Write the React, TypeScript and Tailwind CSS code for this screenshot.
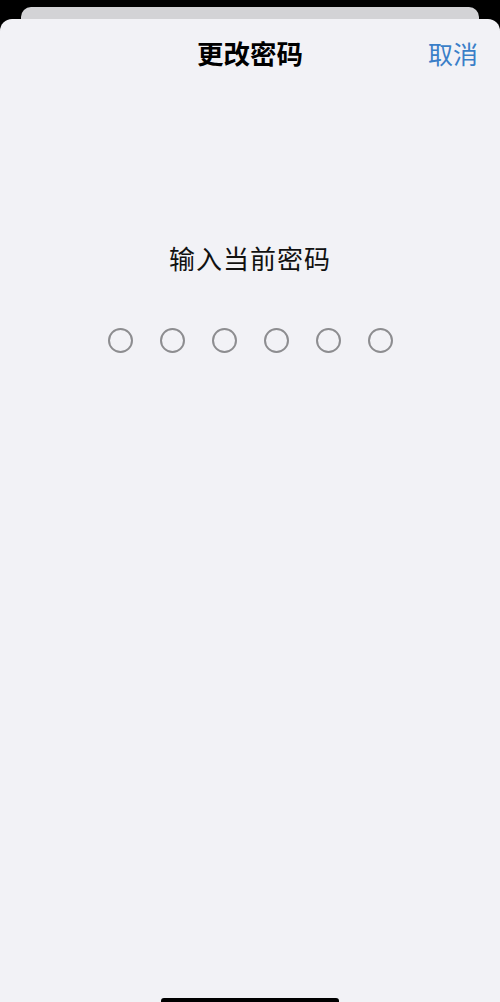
import React from "react";

const font = { fontFamily: '"Noto Sans CJK SC", "Noto Sans", sans-serif' };

export default function App() {
  return (
    <div
      className="w-[500px] h-[1002px] bg-black flex flex-col overflow-hidden"
      style={font}
    >
      <div className="mt-[7px] mx-[21px] h-[12px] rounded-t-[10px] bg-[#d3d3d6] shrink-0" />
      <div className="flex-1 flex flex-col rounded-t-[12px] bg-[#f2f2f6]">
        <div className="relative h-[68px] flex items-center justify-center shrink-0">
          <span className="text-[26.5px] font-bold text-black leading-none">
            更改密码
          </span>
          <span className="absolute right-[22px] top-1/2 -translate-y-1/2 text-[25px] text-[#3a7fc8] leading-none">
            取消
          </span>
        </div>
        <div className="mt-[158px] flex justify-center">
          <span className="text-[26px] text-[#111] leading-none tracking-[1px]">
            输入当前密码
          </span>
        </div>
        <div className="mt-[57px] flex justify-center gap-[27px] pl-[1px]">
          {[0, 1, 2, 3, 4, 5].map((i) => (
            <div
              key={i}
              className="w-[25px] h-[25px] rounded-full border-2 border-[#8d8d90]"
            />
          ))}
        </div>
        <div className="mt-auto flex justify-center">
          <div className="w-[178px] h-[5px] rounded-t-[3px] bg-black translate-y-[1px]" />
        </div>
      </div>
    </div>
  );
}
